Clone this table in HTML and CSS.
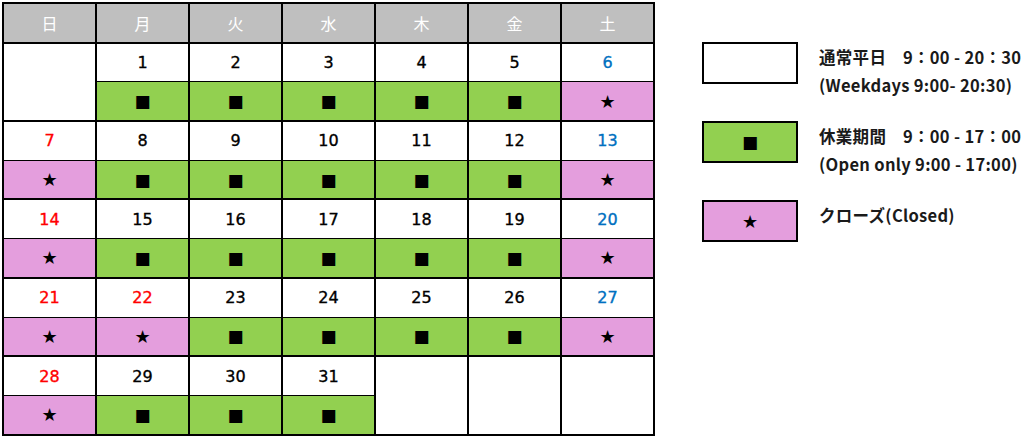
FILE: index.html
```html
<!DOCTYPE html>
<html lang="ja">
<head>
<meta charset="utf-8">
<title>営業カレンダー</title>
<link rel="stylesheet" href="styles.css">
</head>
<body>
<div class="page">
  <table class="cal">
    <thead>
      <tr class="head">
        <th>日</th><th>月</th><th>火</th><th>水</th><th>木</th><th>金</th><th>土</th>
      </tr>
    </thead>
    <tbody>
      <tr class="day">
        <td rowspan="2" class="empty"></td>
        <td>1</td><td>2</td><td>3</td><td>4</td><td>5</td><td class="sat">6</td>
      </tr>
      <tr class="mark">
        <td class="g">■</td><td class="g">■</td><td class="g">■</td><td class="g">■</td><td class="g">■</td><td class="p">★</td>
      </tr>
      <tr class="day">
        <td class="sun">7</td><td>8</td><td>9</td><td>10</td><td>11</td><td>12</td><td class="sat">13</td>
      </tr>
      <tr class="mark">
        <td class="p">★</td><td class="g">■</td><td class="g">■</td><td class="g">■</td><td class="g">■</td><td class="g">■</td><td class="p">★</td>
      </tr>
      <tr class="day">
        <td class="sun">14</td><td>15</td><td>16</td><td>17</td><td>18</td><td>19</td><td class="sat">20</td>
      </tr>
      <tr class="mark">
        <td class="p">★</td><td class="g">■</td><td class="g">■</td><td class="g">■</td><td class="g">■</td><td class="g">■</td><td class="p">★</td>
      </tr>
      <tr class="day">
        <td class="sun">21</td><td class="sun">22</td><td>23</td><td>24</td><td>25</td><td>26</td><td class="sat">27</td>
      </tr>
      <tr class="mark">
        <td class="p">★</td><td class="p">★</td><td class="g">■</td><td class="g">■</td><td class="g">■</td><td class="g">■</td><td class="p">★</td>
      </tr>
      <tr class="day">
        <td class="sun">28</td><td>29</td><td>30</td><td>31</td>
        <td rowspan="2" class="empty"></td><td rowspan="2" class="empty"></td><td rowspan="2" class="empty"></td>
      </tr>
      <tr class="mark">
        <td class="p">★</td><td class="g">■</td><td class="g">■</td><td class="g">■</td>
      </tr>
    </tbody>
  </table>

  <div class="legend">
    <div class="item">
      <div class="box white"></div>
      <div class="text">
        <div>通常平日　9：00 - 20：30</div>
        <div>(Weekdays 9:00- 20:30)</div>
      </div>
    </div>
    <div class="item">
      <div class="box g">■</div>
      <div class="text">
        <div>休業期間　9：00 - 17：00</div>
        <div>(Open only 9:00 - 17:00)</div>
      </div>
    </div>
    <div class="item">
      <div class="box p">★</div>
      <div class="text">
        <div>クローズ(Closed)</div>
      </div>
    </div>
  </div>
</div>
</body>
</html>
```

FILE: styles.css
```css
html, body {
  margin: 0;
  padding: 0;
  background: #ffffff;
}

.page {
  display: flex;
  align-items: flex-start;
  padding: 2px 0 0 2px;
}

.cal {
  border-collapse: collapse;
  table-layout: fixed;
  width: 653px;
  font-family: "DejaVu Sans", "Noto Sans CJK JP", sans-serif;
  font-weight: 400;
  font-size: 16px;
  color: #000;
}

.cal .day td {
  -webkit-text-stroke: 0.35px currentColor;
}

.cal th,
.cal td {
  border: 2px solid #000;
  text-align: center;
  vertical-align: middle;
  padding: 0;
  height: 37.7px;
}

.cal th {
  background: #bfbfbf;
  color: #ffffff;
  font-family: "Noto Sans CJK JP", sans-serif;
  font-weight: 400;
  font-size: 16px;
}

.cal .day td {
  border-bottom-width: 1px;
}

.cal .mark td {
  border-top-width: 1px;
  font-family: "DejaVu Sans", sans-serif;
  font-weight: 400;
}

.cal td.empty {
  border-bottom-width: 2px;
  background: #fff;
}

.cal .g {
  background: #92d050;
  font-size: 17px;
}

.cal .p {
  background: #e49edd;
  font-size: 18px;
}

.cal .sun {
  color: #ff0000;
}

.cal .sat {
  color: #0070c0;
}

.legend {
  display: flex;
  flex-direction: column;
  gap: 22px;
  margin: 40px 0 0 47px;
}

.item {
  display: flex;
  align-items: flex-start;
}

.box {
  width: 92px;
  height: 38px;
  border: 2px solid #000;
  display: flex;
  align-items: center;
  justify-content: center;
  font-family: "DejaVu Sans", sans-serif;
  flex: none;
}

.box.white {
  background: #fff;
}

.box.g {
  background: #92d050;
  font-size: 17px;
}

.box.p {
  background: #e49edd;
  font-size: 18px;
}

.text {
  margin: 1px 0 0 21px;
  font-family: "Noto Sans CJK JP", sans-serif;
  font-weight: 700;
  font-size: 16.5px;
  letter-spacing: 0.3px;
  line-height: 28px;
  color: #1a1a1a;
  white-space: nowrap;
}
```
